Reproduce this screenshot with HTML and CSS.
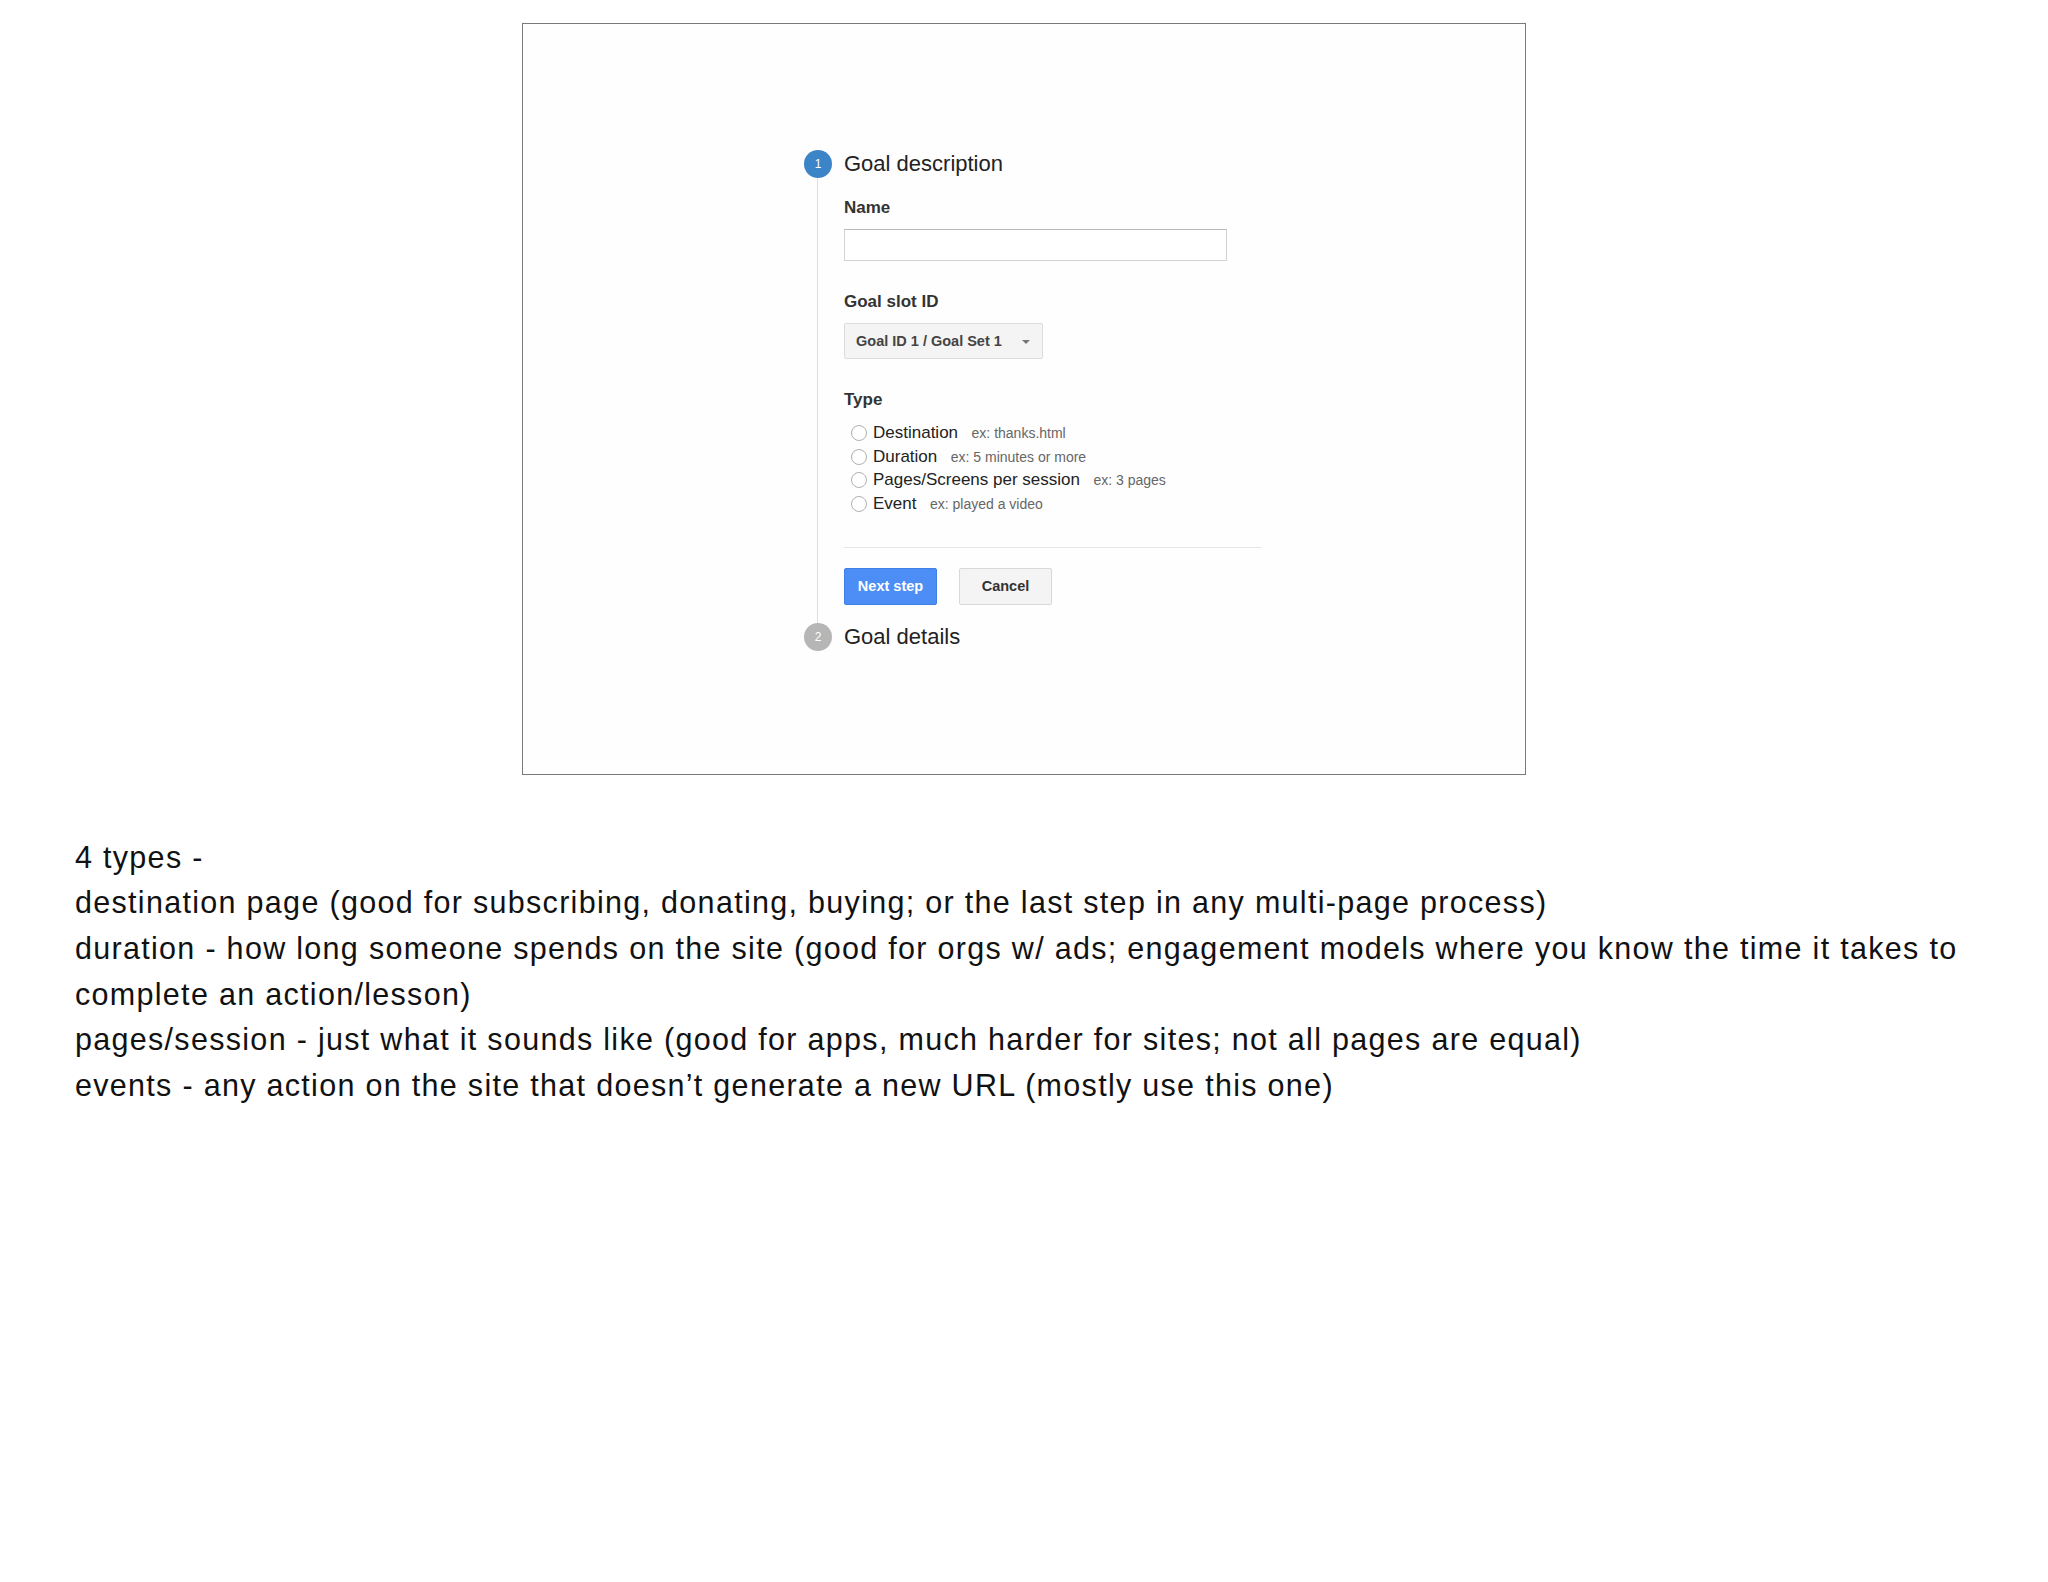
FILE: index.html
```html
<!DOCTYPE html>
<html lang="en">
<head>
<meta charset="utf-8">
<title>Goal setup</title>
<link rel="stylesheet" href="styles.css">
</head>
<body>
<div class="slide">
  <div class="frame">
    <div class="wizard">
      <div class="step-head">
        <span class="badge badge-active">1</span>
        <span class="step-title">Goal description</span>
      </div>
      <div class="step-body">
        <div class="field-label">Name</div>
        <div class="text-input"></div>
        <div class="field-label gap">Goal slot ID</div>
        <div class="select"><span>Goal ID 1 / Goal Set 1</span><span class="caret"></span></div>
        <div class="field-label gap">Type</div>
        <ul class="radios">
          <li><span class="radio"></span><span class="opt-text"><span class="opt">Destination</span><span class="hint">ex: thanks.html</span></span></li>
          <li><span class="radio"></span><span class="opt-text"><span class="opt">Duration</span><span class="hint">ex: 5 minutes or more</span></span></li>
          <li><span class="radio"></span><span class="opt-text"><span class="opt">Pages/Screens per session</span><span class="hint">ex: 3 pages</span></span></li>
          <li><span class="radio"></span><span class="opt-text"><span class="opt">Event</span><span class="hint">ex: played a video</span></span></li>
        </ul>
        <div class="divider"></div>
        <div class="actions">
          <button class="btn btn-primary">Next step</button>
          <button class="btn btn-default">Cancel</button>
        </div>
      </div>
      <div class="step-head">
        <span class="badge badge-idle">2</span>
        <span class="step-title">Goal details</span>
      </div>
    </div>
  </div>
  <div class="notes">
    <p>4 types -</p>
    <p>destination page (good for subscribing, donating, buying; or the last step in any multi-page process)</p>
    <p>duration - how long someone spends on the site (good for orgs w/ ads; engagement models where you know the time it takes to complete an action/lesson)</p>
    <p>pages/session - just what it sounds like (good for apps, much harder for sites; not all pages are equal)</p>
    <p>events - any action on the site that doesn’t generate a new URL (mostly use this one)</p>
  </div>
</div>
</body>
</html>
```
FILE: styles.css
```css
html, body {
  margin: 0;
  padding: 0;
  background: #ffffff;
}

body {
  font-family: "Liberation Sans", Arial, Helvetica, sans-serif;
  width: 2048px;
  height: 1582px;
  overflow: hidden;
}

.slide {
  display: flex;
  flex-direction: column;
}

.frame {
  margin: 23px 0 0 522px;
  width: 1004px;
  height: 752px;
  box-sizing: border-box;
  border: 1px solid #7a7a7a;
  background: #fefefe;
  padding: 126px 0 0 281px;
}

.wizard {
  display: flex;
  flex-direction: column;
  width: 460px;
}

.step-head {
  display: flex;
  align-items: center;
  height: 28px;
  gap: 12px;
}

.badge {
  width: 28px;
  height: 28px;
  border-radius: 50%;
  color: #fff;
  font-size: 12px;
  display: flex;
  align-items: center;
  justify-content: center;
  flex: none;
}

.badge-active {
  background: #3c84c8;
}

.badge-idle {
  background: #b6b6b6;
}

.step-title {
  font-size: 22px;
  line-height: 28px;
  color: #222;
}

.step-body {
  margin-left: 13px;
  border-left: 1px solid #dedede;
  padding: 20px 0 18.5px 26px;
  display: flex;
  flex-direction: column;
  align-items: flex-start;
}

.field-label {
  font-size: 17px;
  line-height: 20px;
  font-weight: bold;
  color: #333;
}

.field-label.gap {
  margin-top: 31px;
}

.text-input {
  margin-top: 11px;
  width: 383px;
  height: 32px;
  box-sizing: border-box;
  border: 1px solid #d3d3d3;
  border-top-color: #b8b8b8;
  background: #fff;
}

.select {
  margin-top: 11px;
  width: 199px;
  height: 36px;
  box-sizing: border-box;
  border: 1px solid #dcdcdc;
  border-radius: 2px;
  background: #f4f4f4;
  padding: 0 12px 0 11px;
  display: flex;
  align-items: center;
  justify-content: space-between;
  font-size: 14.5px;
  font-weight: bold;
  color: #444;
}

.caret {
  width: 0;
  height: 0;
  border-left: 4px solid transparent;
  border-right: 4px solid transparent;
  border-top: 4px solid #777;
  margin-top: 2px;
}

.radios {
  list-style: none;
  margin: 11px 0 0 0;
  padding: 0;
}

.radios li {
  height: 23.7px;
  display: flex;
  align-items: center;
}

.radio {
  width: 16px;
  height: 16px;
  box-sizing: border-box;
  border: 1px solid #b0b0b0;
  border-radius: 50%;
  background: #fff;
  margin-left: 7px;
  margin-right: 6px;
  flex: none;
}

.opt {
  font-size: 17px;
  color: #222;
}

.hint {
  font-size: 14px;
  color: #666;
  margin-left: 13.5px;
}

.divider {
  margin-top: 31px;
  width: 418px;
  height: 1px;
  background: #e6e6e6;
}

.actions {
  margin-top: 20px;
  display: flex;
  gap: 22px;
}

.btn {
  width: 93px;
  height: 37px;
  box-sizing: border-box;
  border-radius: 2px;
  font-family: "Liberation Sans", Arial, Helvetica, sans-serif;
  font-size: 14.5px;
  font-weight: bold;
  padding: 0;
  margin: 0;
}

.btn-primary {
  background: #4c8ef5;
  border: 1px solid #3f80e8;
  color: #fff;
}

.btn-default {
  background: #f4f4f4;
  border: 1px solid #d8d8d8;
  color: #333;
}

.notes {
  margin-top: 59.5px;
  padding-left: 75px;
  width: 1920px;
  font-size: 30.5px;
  letter-spacing: 1.3px;
  line-height: 45.7px;
  color: #111;
}

.notes p {
  margin: 0;
}
```
